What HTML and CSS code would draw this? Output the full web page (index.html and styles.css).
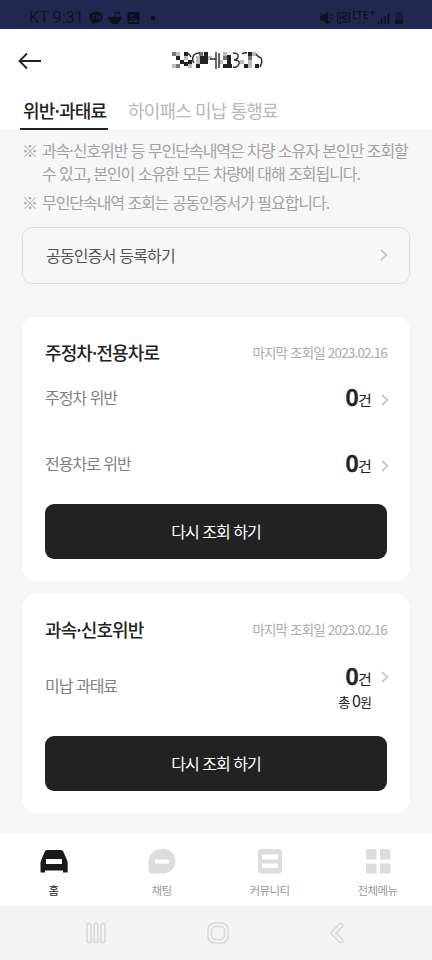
FILE: index.html
```
<!DOCTYPE html>
<html lang="ko">
<head>
<meta charset="utf-8">
<meta name="viewport" content="width=device-width">
<title>위반·과태료</title>
<link rel="stylesheet" href="styles.css">
</head>
<body>
<div class="status">
  <span class="clock">KT 9:31</span>
  <svg class="status-left" width="72" height="16" viewBox="0 0 72 16">
    <ellipse cx="7" cy="7.300" rx="6.800" ry="5.700"/><path d="M3 11l0 4 4-3z"/>
    <path class="cut" d="M3 5.500h3M4.500 5.500v3.500M7 9l1-3.500L9 9M10.500 5.500V9M12 5.500L10.500 7.200 12 9"/>
    <path d="M20 7h11.500c0 4.500-2 7.200-5.700 7.200S20 11.500 20 7z"/><circle cx="20.500" cy="8" r="1.700"/><circle cx="31" cy="8" r="1.700"/><path class="line" d="M26 7l.8-4.500 3 .5"/><circle cx="30" cy="3" r="1.300"/>
    <rect x="38.500" y="2" width="12" height="12" rx="2"/><path class="cut" d="M40.500 11.500l3-3.500 2 2 1.500-1 2 2.500z"/><circle class="hole" cx="42.500" cy="5.500" r="1.200"/>
    <circle cx="64" cy="8" r="2.300"/>
  </svg>
  <svg class="status-right" width="85" height="18" viewBox="0 0 85 18">
    <path d="M0 6.500h3l5-4v13l-5-4H0z"/><path class="line" d="M0 3l9 11M10 4v2M10 8v2M10 12v2M12 5v2M12 9v2"/>
    <path class="line" d="M17.500 4h12v9h-8l-2 2v-2h-2zM20 6v5M23 6v5M20 8.500h3M25 6.500v4h2l1-1v-2l-1-1z"/>
    <text x="32.500" y="10">LTE</text><path class="line" d="M52.500 1v5M50 3.500h5"/><path class="line dim-line" d="M39 12v3h2M44 15v-3"/>
    <path d="M58 12h1.500v3H58zM61 9.500h1.500V15H61zM64.500 7H66v8h-1.500zM67.500 4h2v11h-2z"/>
    <path class="dim" d="M75 6l2-3h4l2 3v6h-8z"/><path d="M75 11h8v4h-8z"/>
  </svg>
</div>
<header class="header">
  <svg class="back" width="26" height="20" viewBox="0 0 26 20"><path d="M24 10H3M10 2.500L2.500 10 10 17.500"/></svg>
  <svg class="masked" width="92" height="18" viewBox="0 0 92 18">
    <g fill="#777"><path d="M0 0h4v4H0zM4 12h4v4H4zM27 0h4v4h-4zM51 4h4v4h-4zM76 4h4v4h-4z"/></g>
    <g fill="#222"><path d="M12 0h4v4h-4zM4 4h4v4H4zM8 8h4v4H8zM12 10h4v4h-4zM16 8h4v4h-4zM24 12h4v4h-4zM28 4h8v8h-8zM32 0h4v4h-4zM51 12h9v4h-9zM55 3h4v9h-4zM76 0h4v4h-4zM72 12h4v4h-4zM83 12h4v4h-4z"/></g>
    <g fill="#bbb"><path d="M4 0h4v4H4zM12 4h4v4h-4zM0 12h4v4H0zM16 12h4v4h-4zM24 4h4v8h-4zM36 4h4v4h-4zM51 0h4v4h-4zM76 8h4v8h-4zM80 0h4v4h-4zM68 8h4v4h-4zM47 8h4v4h-4z"/></g>
    <path class="scribble" d="M15 1q3 1 4 4M28 1q-6 0-7 4t1 6M38 7h6M44 0v17M47 1v15M61 1q6 0 5 4-1 3-4 3 6 0 5 4-2 4-6 3M70 2q3-2 5-1M84 2q2 3 5 4 2 4-1 9"/>
  </svg>
</header>
<nav class="tabs"><span class="tab active">위반·과태료</span><span class="tab second">하이패스 미납 통행료</span></nav>
<main class="content">
  <ul class="notes">
    <li><span class="mark">※</span><span>과속·신호위반 등 무인단속내역은 차량 소유자 본인만 조회할<br>수 있고, 본인이 소유한 모든 차량에 대해 조회됩니다.</span></li>
    <li><span class="mark">※</span><span>무인단속내역 조회는 공동인증서가 필요합니다.</span></li>
  </ul>
  <div class="cert"><span>공동인증서 등록하기</span><svg class="chev" width="8" height="12" viewBox="0 0 8 12"><path d="M1 1l5.500 5L1 11"/></svg></div>
  <section class="card first">
    <div class="card-head"><h2>주정차·전용차로</h2><span class="date">마지막 조회일 2023.02.16</span></div>
    <div class="row"><span class="label">주정차 위반</span><span class="count"><b>0</b>건</span><svg class="chev" width="8" height="12" viewBox="0 0 8 12"><path d="M1 1l5.500 5L1 11"/></svg></div>
    <div class="row"><span class="label">전용차로 위반</span><span class="count"><b>0</b>건</span><svg class="chev" width="8" height="12" viewBox="0 0 8 12"><path d="M1 1l5.500 5L1 11"/></svg></div>
    <button class="again">다시 조회 하기</button>
  </section>
  <section class="card">
    <div class="card-head"><h2>과속·신호위반</h2><span class="date">마지막 조회일 2023.02.16</span></div>
    <div class="row unpaid"><span class="label">미납 과태료</span><span class="totals"><span class="count"><b>0</b>건</span><span class="sum">총 <i>0</i>원</span></span><svg class="chev" width="8" height="12" viewBox="0 0 8 12"><path d="M1 1l5.500 5L1 11"/></svg></div>
    <button class="again">다시 조회 하기</button>
  </section>
</main>
<nav class="bottom">
  <div class="item on"><svg width="28" height="26" viewBox="0 0 28 26"><path fill-rule="evenodd" d="M7 2h14q1.500 0 2.200 1.500L27 12q.7 1.500.7 4v8.500H23v-2H5v2H.5V16q0-2.500.7-4L4.800 3.500Q5.500 2 7 2zM6 11v5h16v-5z"/></svg><span>홈</span></div>
  <div class="item"><svg width="28" height="26" viewBox="0 0 28 26"><path fill-rule="evenodd" d="M14 1h1c7 0 12.500 5.500 12.500 12.300S22 25.500 15 25.500H2.500q-2 0-2-2V13.500C.5 6.500 6.500 1 14 1zM7 11.500v4h14v-4z"/></svg><span>채팅</span></div>
  <div class="item"><svg width="28" height="26" viewBox="0 0 28 26"><path fill-rule="evenodd" d="M6 1h16q4 0 4 4v16.500q0 4-4 4H6q-4 0-4-4V5q0-4 4-4zM6 6.500v5h16v-5zM6 15.500V20h16v-4.500z"/></svg><span>커뮤니티</span></div>
  <div class="item"><svg width="28" height="26" viewBox="0 0 28 26"><path d="M4 1h8.500v10.500H2V3q0-2 2-2zM16 1h8.500q2 0 2 2v8.500H16zM2 15.500h10.500v10H4q-2 0-2-2zM16 15.500h10.500v8q0 2-2 2H16z"/></svg><span>전체메뉴</span></div>
</nav>
<footer class="system">
  <svg width="20" height="22" viewBox="0 0 20 22"><rect x="1" y="1.500" width="4" height="19" rx="1.800"/><rect x="8" y="1.500" width="4" height="19" rx="1.800"/><rect x="15" y="1.500" width="4" height="19" rx="1.800"/></svg>
  <svg width="22" height="22" viewBox="0 0 22 22"><rect x="1" y="1" width="20" height="20" rx="6.500"/><rect x="4.500" y="4.500" width="13" height="13" rx="4"/></svg>
  <svg width="14" height="22" viewBox="0 0 14 22"><path d="M10 1.500L1.500 9.800q-1 1.200 0 2.400L10 20.500q1.500.5 2.500-.7.800-1.300 0-2.300L6 11l6.500-6.500q.8-1 0-2.300-1-1.200-2.500-.7z"/></svg>
</footer>
</body>
</html>
```
FILE: styles.css
```
* { box-sizing: border-box; }
body { margin: 0; width: 432px; height: 960px; overflow: hidden; display: flex; flex-direction: column; background: #f7f7f7; color: #222; font-family: "Noto Sans CJK KR", sans-serif; font-size: 16px; letter-spacing: -0.9px; }
.status { height: 29px; flex: none; background: #21284f; display: flex; align-items: center; padding: 7px 27px 0 29px; color: #0f1328; fill: #0d1022; }
.clock { font: 16.5px/20px Roboto, sans-serif; letter-spacing: -0.15px; width: 60px; white-space: nowrap; }
.status-right { margin-left: auto; }
.status .line { fill: none; stroke: #0d1022; stroke-width: 1; }
.status .dim-line { stroke: #181e3c; }
.status .cut { fill: none; stroke: #21284f; stroke-width: .9; }
.status .hole { fill: #21284f; }
.status .dim { fill: #171c38; }
.status text { font: 500 10px Roboto, sans-serif; letter-spacing: .1px; }
.header { height: 63px; flex: none; background: #fff; display: grid; grid-template-columns: 172px 92px; align-items: center; }
.back { margin-left: 17px; fill: none; stroke: #222; stroke-width: 1.8; }
.masked { margin-top: 1px; }
.scribble { fill: none; stroke: #333; stroke-width: 1.5; }
.tabs { height: 38px; flex: none; background: #fff; display: flex; gap: 20px; padding-left: 20px; font-size: 18px; line-height: 36px; letter-spacing: -0.8px; white-space: nowrap; }
.tab { height: 38px; color: #b7b7b7; }
.active { width: 88px; padding-left: 3px; font-weight: 500; color: #222; border-bottom: 2px solid #222; }
.second { letter-spacing: -.85px; }
.content { height: 704px; flex: none; padding: 9px 22px 0; }
.notes { list-style: none; margin: 0; padding: 0; color: #a2a2a2; line-height: 22.5px; letter-spacing: -1.05px; white-space: nowrap; }
.notes li { display: flex; margin-bottom: 7px; }
.mark { width: 20px; flex: none; }
.cert { height: 57px; margin-top: 13px; border: 1px solid #ddd; border-radius: 10px; display: flex; justify-content: space-between; align-items: center; padding: 0 21px 0 23px; color: #555; letter-spacing: -.8px; }
.chev { flex: none; fill: none; stroke: #c8c8c8; stroke-width: 1.7; }
.card { height: 219px; background: #fff; border-radius: 14px; padding: 20px 23px 0; margin-top: 13px; }
.card.first { height: 264px; margin-top: 33px; }
.card-head { height: 30px; display: flex; justify-content: space-between; align-items: center; white-space: nowrap; }
h2 { margin: 0; font-size: 18px; font-weight: 500; letter-spacing: -.9px; }
.date { color: #aaa; font-size: 13.500px; letter-spacing: -.83px; }
.row { height: 66px; display: flex; align-items: center; }
.first .row:nth-child(2) { margin-top: -2px; }
.row .chev { margin: 5px -2px 0 10px; }
.label { flex: 1; color: #808080; letter-spacing: -1px; }
.first .label { padding-bottom: 1px; }
.count { font-size: 15px; line-height: 30px; padding-top: 1px; }
.count b { font-size: 23px; font-weight: 500; letter-spacing: -.4px; -webkit-text-stroke: .7px #222; }
.again { display: block; width: 100%; height: 55px; margin: 7px 0 0; padding: 0; border: 0; border-radius: 9px; background: #222; color: #fff; font: inherit; letter-spacing: -.95px; }
.unpaid { height: 80px; margin-top: 2px; }
.unpaid .label { padding-bottom: 2px; }
.totals { display: flex; flex-direction: column; align-items: flex-end; }
.sum { font-size: 13px; line-height: 20px; margin-top: -4px; }
.sum i { font-style: normal; font-size: 16px; }
.unpaid .chev { margin-top: -17px; }
.unpaid + .again { margin-top: 10px; }
.bottom { height: 72px; flex: none; background: #fff; display: flex; fill: #ddd; }
.item { width: 108px; display: flex; flex-direction: column; align-items: center; padding-top: 14px; font-size: 11.500px; line-height: 20px; letter-spacing: -.6px; color: #999; }
.item span { margin: 6px 1px 0 0; }
.on { color: #222; fill: #1a1a1a; }
.system { height: 54px; flex: none; background: #f4f4f4; display: flex; align-items: center; gap: 101px; padding-left: 86px; fill: none; stroke: #d7d7d7; stroke-width: 1.500; }
```
